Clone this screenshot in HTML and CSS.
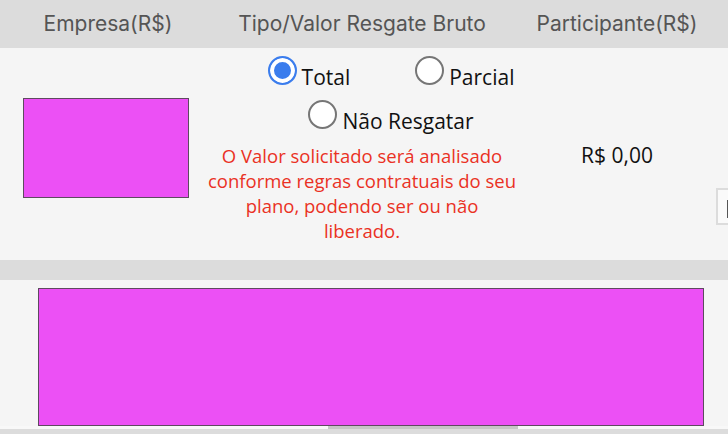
FILE: index.html
```html
<!DOCTYPE html>
<html lang="pt-BR">
<head>
    <meta charset="UTF-8">
    <title>Resgate</title>
    <link rel="stylesheet" href="styles.css">
</head>
<body>
<div class="tabela">
    <div class="cab">
        <div class="c1">Empresa(R$)</div>
        <div class="c2">Tipo/Valor Resgate Bruto</div>
        <div class="c3">Participante(R$)</div>
        <div class="c4"></div>
    </div>
    <div class="linha">
        <div class="c1"><div class="bloco"></div></div>
        <div class="c2">
            <div class="opcoes">
                <label class="opc"><span class="radio marcado"></span>Total</label>
                <label class="opc"><span class="radio"></span>Parcial</label>
            </div>
            <div class="opcoes">
                <label class="opc"><span class="radio"></span>Não Resgatar</label>
            </div>
            <p class="aviso">O Valor solicitado será analisado<br>conforme regras contratuais do seu<br>plano, podendo ser ou não<br>liberado.</p>
        </div>
        <div class="c3 valor">R$ 0,00</div>
        <div class="c4"><div class="campo"><span class="cursor"></span></div></div>
    </div>
    <div class="faixa"></div>
    <div class="secao">
        <div class="bloco2"></div>
    </div>
    <div class="rolagem"><div class="barra"></div></div>
    <div class="rodape"></div>
</div>
</body>
</html>
```

FILE: styles.css
```css
*{margin:0;padding:0;box-sizing:border-box;}
html,body{overflow:hidden;background:#f5f5f5;}
body{font-family:"Open Sans","DejaVu Sans",sans-serif;color:#111;}
.tabela{width:916px;}
.cab,.linha{display:grid;grid-template-columns:216px 292px 208px 200px;}
.cab{height:48px;background:#dcdcdc;align-items:center;text-align:center;font-family:Inter,"Open Sans",sans-serif;font-size:21px;color:#555;padding-bottom:2px;}
.cab .c3,.linha .c3{padding-left:10px;}
.linha{height:212px;background:#f5f5f5;}
.bloco{width:166px;height:100px;margin:50px 0 0 23px;background:#ec50f5;border:1px solid #5e4a60;}
.linha .c2{padding-top:8px;display:flex;flex-direction:column;align-items:center;}
.opcoes{display:flex;gap:65px;padding-left:58px;height:29px;font-size:21px;margin-bottom:15px;}
.opc{display:flex;align-items:flex-end;gap:5px;line-height:16px;}
.radio{width:29px;height:29px;border-radius:50%;border:2px solid #767676;background:#fff;flex:none;}
.radio.marcado{border-color:#3b7ded;background:#3b7ded;box-shadow:inset 0 0 0 4px #fff;}
.aviso{margin-top:-1px;font-size:18.5px;line-height:25px;color:#ea3124;text-align:center;white-space:nowrap;}
.valor{align-self:center;text-align:center;font-size:21px;padding-top:2px;}
.campo{margin-top:140px;width:160px;height:37px;border:2px solid #dcdcdc;background:#fafafa;padding:10px 0 0 9px;}
.cursor{display:block;width:1px;height:18px;background:#555;}
.faixa{height:20px;background:#dcdcdc;}
.secao{padding:8px 0 0 38px;}
.bloco2{width:666px;height:138px;background:#ec50f5;border:1px solid #5e4a60;}
.rolagem{height:3px;display:flex;width:728px;background:#f8f8f8;}
.barra{width:190px;margin-left:328px;background:#c6c6c6;}
.rodape{height:6px;background:#dcdcdc;}
```
